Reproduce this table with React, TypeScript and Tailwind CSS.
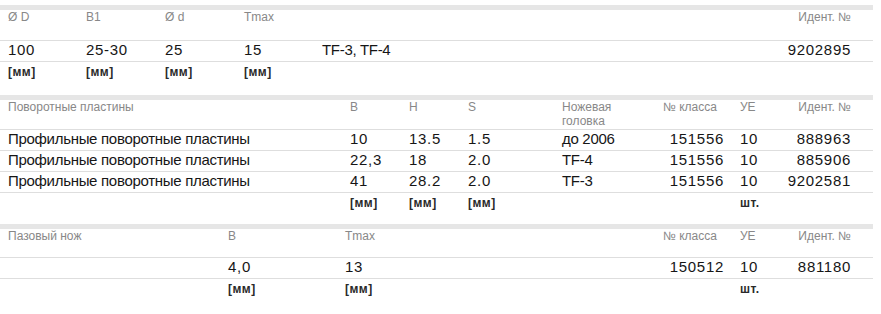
import React from "react";

type Cell = { text?: string; right?: boolean; num?: boolean };

const font = { fontFamily: '"Liberation Sans", Arial, sans-serif' };

function Spec({
  cols,
  head,
  rows,
  units,
  headH,
  className,
}: {
  cols: string[];
  head: Cell[];
  rows: Cell[][];
  units: Cell[];
  headH: string;
  className?: string;
}) {
  return (
    <div className={`w-[873px] ${className ?? ""}`}>
      <div className="h-[5px] bg-[#e6e6e6]" />
      <table className="w-full table-fixed border-separate border-spacing-0">
        <colgroup>
          {cols.map((c, i) => (
            <col key={i} className={c} />
          ))}
        </colgroup>
        <thead>
          <tr>
            {head.map((c, i) => (
              <th
                key={i}
                className={`${headH} p-0 align-top border-b border-[#dedede] text-[12px] leading-[14px] font-normal text-[#888888] ${c.right ? "text-right pr-[22px]" : "text-left pl-2"}`}
              >
                {c.text}
              </th>
            ))}
          </tr>
        </thead>
        <tbody>
          {rows.map((r, ri) => (
            <tr key={ri}>
              {r.map((c, i) => (
                <td
                  key={i}
                  className={`h-[21px] p-0 align-top border-b border-[#dedede] text-[15px] leading-[17px] text-[#161616] whitespace-nowrap ${c.num ? "tracking-[0.7px]" : "tracking-[-0.3px]"} ${c.right ? (i === r.length - 1 ? "text-right pr-[22px]" : "text-right pr-2") : "pl-2"}`}
                >
                  {c.text}
                </td>
              ))}
            </tr>
          ))}
          <tr>
            {units.map((c, i) => (
              <td key={i} className="h-[21px] p-0 pl-2 pt-[3px] align-top text-[12px] leading-[14px] font-bold tracking-[0.5px] text-[#2a2a2a]">
                {c.text}
              </td>
            ))}
          </tr>
        </tbody>
      </table>
    </div>
  );
}

export default function App() {
  const mm = { text: "[мм]" };
  const e = {};
  const n = (text: string, right = false) => ({ text, num: true, right });
  return (
    <div className="w-[881px] h-[314px] bg-white pt-[5px]" style={font}>
      <Spec
        headH="h-[31px]"
        cols={["w-[78px]", "w-[79px]", "w-[79px]", "w-[78px]", "w-[458px]", "w-[101px]"]}
        head={[{ text: "Ø D" }, { text: "B1" }, { text: "Ø d" }, { text: "Tmax" }, e, { text: "Идент. №", right: true }]}
        rows={[[n("100"), n("25-30"), n("25"), n("15"), { text: "TF-3, TF-4" }, n("9202895", true)]]}
        units={[mm, mm, mm, mm, e, e]}
      />
      <Spec
        className="mt-[12px]"
        headH="h-[30px]"
        cols={["w-[342px]", "w-[59px]", "w-[59px]", "w-[94px]", "w-[101px]", "w-[77px]", "w-[40px]", "w-[101px]"]}
        head={[
          { text: "Поворотные пластины" },
          { text: "B" },
          { text: "H" },
          { text: "S" },
          { text: "Ножевая головка" },
          { text: "№ класса" },
          { text: "УЕ" },
          { text: "Идент. №", right: true },
        ]}
        rows={[
          ["10", "13.5", "1.5", "до 2006", "888963"],
          ["22,3", "18", "2.0", "TF-4", "885906"],
          ["41", "28.2", "2.0", "TF-3", "9202581"],
        ].map(([b, h, s, k, id]) => [
          { text: "Профильные поворотные пластины" },
          n(b),
          n(h),
          n(s),
          { text: k },
          n("151556", true),
          n("10"),
          n(id, true),
        ])}
        units={[e, mm, mm, mm, e, e, { text: "шт." }, e]}
      />
      <Spec
        className="mt-[10px]"
        headH="h-[29px]"
        cols={["w-[220px]", "w-[117px]", "w-[318px]", "w-[77px]", "w-[40px]", "w-[101px]"]}
        head={[
          { text: "Пазовый нож" },
          { text: "B" },
          { text: "Tmax" },
          { text: "№ класса" },
          { text: "УЕ" },
          { text: "Идент. №", right: true },
        ]}
        rows={[[e, n("4,0"), n("13"), n("150512", true), n("10"), n("881180", true)]]}
        units={[e, mm, mm, e, { text: "шт." }, e]}
      />
    </div>
  );
}
